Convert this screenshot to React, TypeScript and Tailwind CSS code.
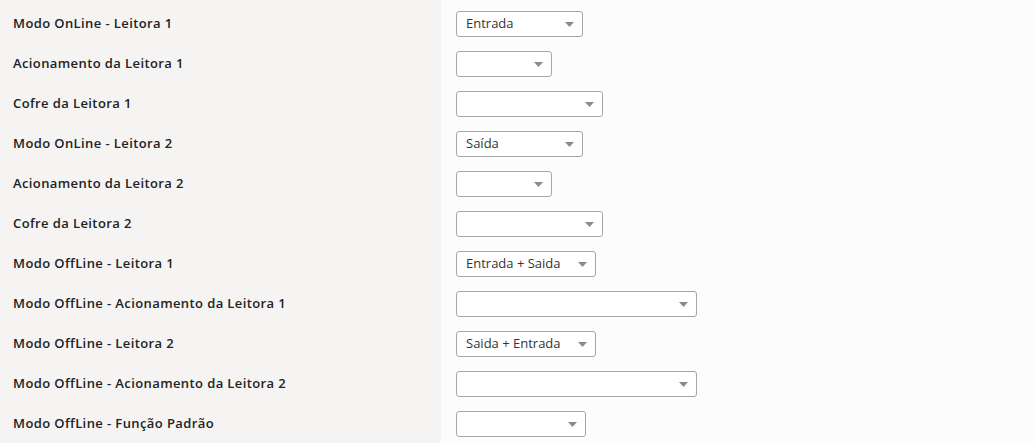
const rows: { label: string; value: string; width: string }[] = [
  { label: "Modo OnLine - Leitora 1", value: "Entrada", width: "w-[127px]" },
  { label: "Acionamento da Leitora 1", value: "", width: "w-[96px]" },
  { label: "Cofre da Leitora 1", value: "", width: "w-[147px]" },
  { label: "Modo OnLine - Leitora 2", value: "Saída", width: "w-[127px]" },
  { label: "Acionamento da Leitora 2", value: "", width: "w-[96px]" },
  { label: "Cofre da Leitora 2", value: "", width: "w-[147px]" },
  { label: "Modo OffLine - Leitora 1", value: "Entrada + Saida", width: "w-[140px]" },
  { label: "Modo OffLine - Acionamento da Leitora 1", value: "", width: "w-[241px]" },
  { label: "Modo OffLine - Leitora 2", value: "Saida + Entrada", width: "w-[140px]" },
  { label: "Modo OffLine - Acionamento da Leitora 2", value: "", width: "w-[241px]" },
  { label: "Modo OffLine - Função Padrão", value: "", width: "w-[130px]" },
];

function Select({ value, width }: { value: string; width: string }) {
  return (
    <div
      className={`${width} h-[26px] flex items-center justify-between rounded-[3px] border border-[#a6a6a6] bg-white pl-[9px] pr-[8px]`}
    >
      <span className="text-[13px] text-[#333]">{value}</span>
      <svg width="9" height="5" viewBox="0 0 9 5">
        <path d="M0 0 L9 0 L4.5 5 Z" fill="#8a8a8a" />
      </svg>
    </div>
  );
}

export default function App() {
  return (
    <div
      className="w-[1035px] h-[443px] overflow-hidden flex bg-[#fcfcfc]"
      style={{ fontFamily: '"Open Sans", "Noto Sans", sans-serif' }}
    >
      <div className="w-[441px] bg-[#f5f4f2] pt-[4px]">
        {rows.map((r) => (
          <div key={r.label} className="h-[40px] flex items-center pl-[13px]">
            <span className="text-[13px] font-semibold text-[#222] tracking-[0.4px]">
              {r.label}
            </span>
          </div>
        ))}
      </div>
      <div className="flex-1 pt-[4px] pl-[15px]">
        {rows.map((r) => (
          <div key={r.label} className="h-[40px] flex items-center">
            <Select value={r.value} width={r.width} />
          </div>
        ))}
      </div>
    </div>
  );
}
